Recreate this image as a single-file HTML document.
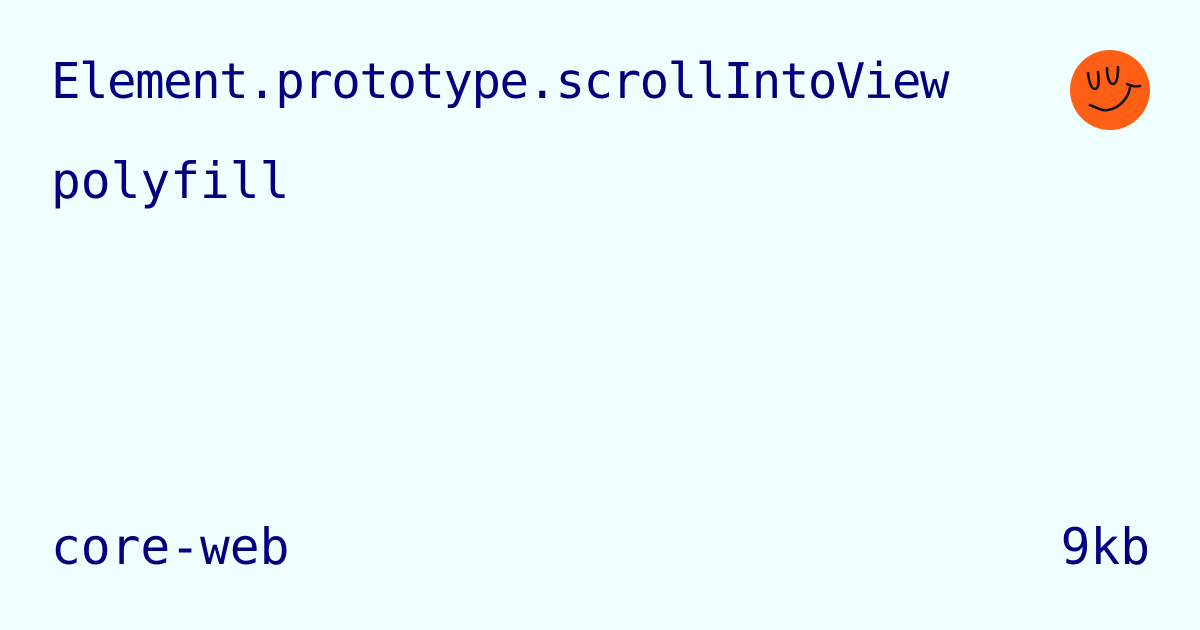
<!DOCTYPE html>
<html><head><meta charset="utf-8"><style>
html,body{margin:0;padding:0}
body{width:1200px;height:630px;background:#f0ffff;position:relative;overflow:hidden;
font-family:"DejaVu Sans Mono","Liberation Mono",monospace;color:#000080}
.t{position:absolute;font-size:49.5px;line-height:1;white-space:nowrap}
</style></head><body>
<div class="t" style="left:51px;top:57px;font-size:49px;letter-spacing:-1.47px">Element.prototype.scrollIntoView</div>
<div class="t" style="left:51px;top:157px">polyfill</div>
<div class="t" style="left:51px;top:523px">core-web</div>
<div class="t" style="right:50px;top:523px">9kb</div>
<svg style="position:absolute;left:0;top:0" width="1200" height="630">
<circle cx="1110" cy="90" r="40" fill="#ff5f14"/>
<g fill="none" stroke="#111" stroke-width="2.6" stroke-linecap="round" stroke-linejoin="round">
<path d="M1088,73 C1089,81 1091,89 1095,89 C1099,89 1099,81 1098,72"/>
<path d="M1107,68 C1107,76 1109,84 1113,84 C1117,84 1118,76 1118,67"/>
<path d="M1090,105 C1097,108 1102,111 1108,110 C1120,108 1128,98 1130,88"/>
<path d="M1127,84 C1131,86 1135,87 1140,86"/>
</g>
</svg>
</body></html>
